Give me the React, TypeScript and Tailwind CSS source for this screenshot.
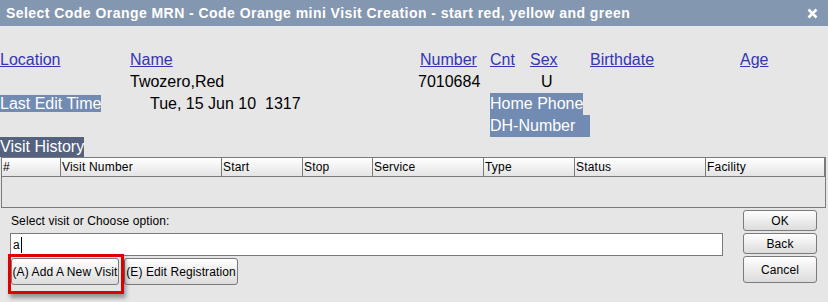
import React from "react";

const F = { fontFamily: '"Liberation Sans", Arial, sans-serif' };

function Btn({ children, className = "" }: { children: React.ReactNode; className?: string }) {
  return (
    <div
      className={
        "flex items-center justify-center whitespace-nowrap rounded-[3px] border border-[#7b7b7b] bg-gradient-to-b from-white to-[#dcdcdc] text-[12px] tracking-[0.1px] text-black " +
        className
      }
    >
      {children}
    </div>
  );
}

const cols: [string, number][] = [
  ["#", 59],
  ["Visit Number", 161],
  ["Start", 81],
  ["Stop", 70],
  ["Service", 111],
  ["Type", 91],
  ["Status", 131],
  ["Facility", 119],
];

export default function App() {
  return (
    <div style={F} className="relative h-[302px] w-[828px] overflow-hidden bg-[#e6e6e6] text-black">
      {/* Title bar */}
      <div className="flex h-[26px] items-center justify-between bg-[#8497b0] pl-[6px] pr-[10px]">
        <div className="text-[14px] font-bold leading-none tracking-[0.45px] text-white">
          Select Code Orange MRN - Code Orange mini Visit Creation - start red, yellow and green
        </div>
        <svg width="11" height="11" viewBox="0 0 11 11">
          <path d="M1.5 1.5 L9.5 9.5 M9.5 1.5 L1.5 9.5" stroke="white" strokeWidth="2.6" />
        </svg>
      </div>

      {/* Patient info */}
      <div className="pt-[23px] text-[16px] leading-[22px]">
        <div className="flex h-[22px]">
          <span className="w-[130px] text-[#3535b5] underline">Location</span>
          <span className="w-[290px] text-[#3535b5] underline">Name</span>
          <span className="w-[70px] text-[#3535b5] underline">Number</span>
          <span className="w-[40px] text-[#3535b5] underline">Cnt</span>
          <span className="w-[60px] text-[#3535b5] underline">Sex</span>
          <span className="w-[150px] text-[#3535b5] underline">Birthdate</span>
          <span className="text-[#3535b5] underline">Age</span>
        </div>
        <div className="flex h-[22px]">
          <span className="w-[130px]" />
          <span className="w-[288px]">Twozero,Red</span>
          <span className="w-[122px]">7010684</span>
          <span className="pl-[1px]">U</span>
        </div>
        <div className="flex h-[22px]">
          <div className="w-[150px]">
            <span className="bg-[#728bb3] text-white">Last Edit Time</span>
          </div>
          <span className="w-[340px]">Tue, 15 Jun 10&nbsp; 1317</span>
          <span className="bg-[#728bb3] text-white">Home Phone</span>
        </div>
        <div className="flex h-[22px]">
          <div className="w-[490px]" />
          <span className="w-[100px] bg-[#728bb3] text-white">DH-Number</span>
        </div>
        <div className="flex h-[20px] leading-[20px]">
          <span className="bg-[#54627f] text-white">Visit History</span>
        </div>
      </div>

      {/* Table */}
      <div className="ml-[1px] h-[51px] w-[825px] border border-[#7a7a7a] bg-[#e6e6e6]">
        <div className="flex h-[19px]">
          {cols.map(([c, w]) => (
            <div
              key={c}
              style={{ width: w }}
              className="flex items-center border-b border-r border-[#7a7a7a] bg-gradient-to-b from-white to-[#e4e4e4] pl-[1px] text-[12px] leading-none tracking-[0.2px]"
            >
              {c}
            </div>
          ))}
        </div>
      </div>

      {/* Bottom */}
      <div className="flex">
        <div className="w-[742px] pl-[10px]">
          <div className="pl-[1px] pt-[3px] text-[12px] leading-[20px] tracking-[0.1px]">Select visit or Choose option:</div>
          <div className="mt-[2px] flex h-[23px] w-[713px] items-center border border-[#7a7a7a] bg-white pl-[2px] text-[12px]">
            <span>a</span>
            <span className="ml-[1px] h-[16px] w-[1px] bg-black" />
          </div>
          <div className="mt-[2px] flex gap-[5px] pl-[1px]">
            <div className="relative">
              <Btn className="h-[27px] w-[108px]">(A) Add A New Visit</Btn>
              <div className="pointer-events-none absolute left-[-3px] top-[-4px] h-[40px] w-[116px] border-[3px] border-[#e00000] shadow-[2px_4px_4px_rgba(0,0,0,0.35)]" />
            </div>
            <Btn className="h-[27px] w-[114px]">(E) Edit Registration</Btn>
          </div>
        </div>
        <div className="flex w-[75px] flex-col gap-[2px] pt-[2px] pl-[1px]">
          <Btn className="h-[21px] w-[74px]">OK</Btn>
          <Btn className="h-[21px] w-[74px]">Back</Btn>
          <Btn className="h-[27px] w-[74px]">Cancel</Btn>
        </div>
      </div>
    </div>
  );
}
